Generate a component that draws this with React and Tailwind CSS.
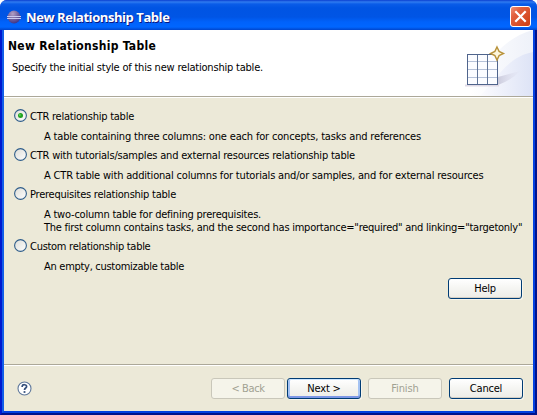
import React from 'react';

const options = [
  {
    label: 'CTR relationship table',
    labelClass: 'tracking-[-0.243px]',
    checked: true,
    lines: [['A table containing three columns: one each for concepts, tasks and references', 'tracking-[-0.171px]']],
  },
  {
    label: 'CTR with tutorials/samples and external resources relationship table',
    labelClass: 'tracking-[-0.2px]',
    lines: [['A CTR table with additional columns for tutorials and/or samples, and for external resources', 'tracking-[-0.178px]']],
  },
  {
    label: 'Prerequisites relationship table',
    labelClass: 'tracking-[-0.233px]',
    lines: [
      ['A two-column table for defining prerequisites.', 'tracking-[-0.221px]'],
      ['The first column contains tasks, and the second has importance="required" and linking="targetonly"', 'tracking-[-0.248px]'],
    ],
  },
  {
    label: 'Custom relationship table',
    labelClass: 'tracking-[-0.28px]',
    lines: [['An empty, customizable table', 'tracking-[-0.286px]']],
  },
];

function Radio({ checked }) {
  return (
    <svg className="h-[13px] w-[13px] shrink-0" viewBox="0 0 13 13">
      <defs>
        <linearGradient id="radioFill" x1="0" y1="0" x2="1" y2="1">
          <stop offset="0" stopColor="#dcdcd7" />
          <stop offset="1" stopColor="#ffffff" />
        </linearGradient>
      </defs>
      <circle cx="6.5" cy="6.5" r="5.9" fill="url(#radioFill)" stroke="#2f5d8a" strokeWidth="1.1" />
      {checked && <circle cx="6.5" cy="6.5" r="2.5" fill="#21a121" />}
      {checked && <circle cx="5.9" cy="5.9" r="1" fill="#55d551" />}
    </svg>
  );
}

function Option({ label, labelClass, checked, lines }) {
  return (
    <div className="pb-[5px]">
      <div className="flex h-[13px] items-center gap-[3px]">
        <Radio checked={checked} />
        <span className={`pt-[2px] ${labelClass}`}>{label}</span>
      </div>
      <div className="pt-[8px] pl-[30px]">
        {lines.map(([text, cls]) => (
          <div key={text} className={`h-[13px] ${cls}`}>{text}</div>
        ))}
      </div>
    </div>
  );
}

const buttonStyles = {
  normal: 'border-[#003c74] bg-linear-to-b from-white via-[#f5f5f2] to-[#eeece6] text-black shadow-[inset_0_-1px_0_#d6d0c5,1px_1px_0_#f7f5ec]',
  focused: 'border-[#003c74] bg-linear-to-b from-white via-[#f5f5f2] to-[#eeece6] text-black shadow-[inset_0_1px_0_#cee7ff,inset_0_-2px_0_#7d97e6,inset_2px_0_0_#a5c3f3,inset_-2px_0_0_#a5c3f3,1px_1px_0_#f7f5ec]',
  disabled: 'border-[#c9c7ba] bg-[#f5f4ea] text-[#a1a192]',
};

function Button({ children, kind = 'normal', className = '' }) {
  return (
    <button className={`h-[21px] w-[74px] rounded-[3px] border pt-px text-center leading-[18px] ${buttonStyles[kind]} ${className}`}>
      {children}
    </button>
  );
}

function EclipseIcon() {
  return (
    <svg className="h-[14px] w-[14px] shrink-0" viewBox="0 0 14 14">
      <defs>
        <radialGradient id="sphere" cx="0.4" cy="0.25" r="0.8">
          <stop offset="0" stopColor="#b3a0c4" />
          <stop offset="0.5" stopColor="#7565a0" />
          <stop offset="1" stopColor="#3a3084" />
        </radialGradient>
      </defs>
      <circle cx="7" cy="7" r="6.4" fill="url(#sphere)" />
      <path d="M0 6.5h14M0 8.5h14" stroke="#c9c9ee" strokeWidth="1" />
    </svg>
  );
}

function CloseButton() {
  return (
    <svg className="h-[21px] w-[21px] shrink-0" viewBox="0 0 21 21">
      <defs>
        <linearGradient id="closeFill" x1="0" y1="0" x2="1" y2="1">
          <stop offset="0" stopColor="#f0957c" />
          <stop offset="0.3" stopColor="#e2603e" />
          <stop offset="1" stopColor="#cc3c10" />
        </linearGradient>
      </defs>
      <rect x="0.5" y="0.5" width="20" height="20" rx="2.5" fill="url(#closeFill)" stroke="#ffffff" />
      <path d="M5.3 5.3l10.4 10.4M15.7 5.3l-10.4 10.4" stroke="#ffffff" strokeWidth="2.2" />
    </svg>
  );
}

function TableBanner() {
  return (
    <svg className="h-[66px] w-[75px] shrink-0" viewBox="0 0 75 66">
      <defs>
        <linearGradient id="swoosh" x1="0" y1="0" x2="1" y2="0">
          <stop offset="0" stopColor="#ffffff" />
          <stop offset="1" stopColor="#eef1f9" />
        </linearGradient>
        <linearGradient id="swooshInner" x1="0" y1="0" x2="1" y2="0">
          <stop offset="0" stopColor="#fbfbfe" />
          <stop offset="1" stopColor="#dde3f6" />
        </linearGradient>
        <linearGradient id="castShadow" x1="0" y1="0" x2="1" y2="0">
          <stop offset="0" stopColor="#cbcbdc" />
          <stop offset="1" stopColor="#e3e5f4" stopOpacity="0.3" />
        </linearGradient>
      </defs>
      <path d="M12 66C22 45 38 10 75 0V66Z" fill="url(#swoosh)" />
      <path d="M22 66C42 45 50 27 75 22V66Z" fill="url(#swooshInner)" />
      <path d="M40 47L62 41Q54 50 40 55Z" fill="url(#castShadow)" />
      <path d="M7 55.5h34" stroke="#dfdae6" strokeWidth="2" />
      <rect x="9.5" y="24.5" width="30" height="30" fill="#fbfcff" />
      <path d="M10 31.5h29M10 39.5h29M10 47.5h29" stroke="#b5c1d8" />
      <path d="M19.5 25v29M29.5 25v29" stroke="#5f7396" />
      <rect x="9.5" y="24.5" width="30" height="30" fill="none" stroke="#4f648c" />
      <path d="M39 17L41.1 21.4L45.5 23.5L41.1 25.6L39 30L36.9 25.6L32.5 23.5L36.9 21.4Z" fill="#fdf6dc" stroke="#b8923a" strokeWidth="1.4" />
    </svg>
  );
}

function HelpIcon() {
  return (
    <svg className="h-[15px] w-[15px] shrink-0" viewBox="0 0 15 15">
      <circle cx="7.5" cy="7.5" r="6.5" fill="#ffffff" stroke="#5f789c" strokeWidth="1.1" />
      <path d="M5.2 6V5.2C5.4 3.2 9.6 3.2 9.6 5.4C9.6 7 7.5 7 7.5 8.9" fill="none" stroke="#35507c" strokeWidth="1.7" />
      <rect x="6.6" y="10.1" width="1.8" height="1.8" fill="#35507c" />
    </svg>
  );
}

export default function App() {
  return (
    <div className="h-[415px] w-[537px] overflow-hidden bg-white font-['DejaVu_Sans_Condensed','DejaVu_Sans',sans-serif] text-[11px] leading-[13px] whitespace-nowrap text-black">
      <div className="flex h-[415px] w-[537px] flex-col overflow-hidden rounded-t-[7px] bg-[#0831d9]">
        <header className="flex h-[30px] shrink-0 items-center justify-between bg-[linear-gradient(to_bottom,#0a3fd0_0px,#2f7bf0_2px,#0a5ce8_4px,#0054e3_8px,#0055e5_17px,#0062fb_22px,#0066ff_27px,#0045cc_30px)] pt-[3px] pr-[6px] pl-[7px]">
          <div className="flex items-center gap-[5px]">
            <EclipseIcon />
            <h1 className="font-['Open_Sans','Noto_Sans',sans-serif] text-[13px] leading-[18px] font-bold tracking-[-0.43px] text-white [text-shadow:1px_1px_0_#0a1883]">New Relationship Table</h1>
          </div>
          <CloseButton />
        </header>
        <div className="flex flex-1 flex-col border-r-2 border-b-2 border-l-2 border-r-[#00138c] border-b-[#00138c] border-l-[#0019cf]">
          <div className="flex flex-1 flex-col border-r-2 border-b-2 border-l-2 border-r-[#0340e0] border-b-[#0340e0] border-l-[#125de8] bg-[#ece9d8]">
            <section className="flex h-[66px] shrink-0 justify-between bg-white pl-[4px]">
              <div className="pt-[9px]">
                <h2 className="text-[12px] leading-[15px] font-bold tracking-[0.28px]">New Relationship Table</h2>
                <p className="pt-[7px] pl-[4px] tracking-[-0.206px]">Specify the initial style of this new relationship table.</p>
              </div>
              <TableBanner />
            </section>
            <div className="h-[2px] shrink-0 border-t border-[#aca899] bg-white" />
            <main className="h-[266px] shrink-0 pt-[11px] pr-[11px] pl-[10px]">
              {options.map((option) => (
                <Option key={option.label} {...option} />
              ))}
              <div className="flex justify-end">
                <Button className="tracking-[-0.3px]">Help</Button>
              </div>
            </main>
            <div className="h-[2px] shrink-0 border-t border-[#aca899] bg-white" />
            <footer className="flex flex-1 items-center justify-between pr-[10px] pl-[13px]">
              <HelpIcon />
              <div className="flex">
                <Button kind="disabled" className="tracking-[-0.4px]">&lt; Back</Button>
                <Button kind="focused" className="ml-[2px] tracking-[-0.2px]">Next &gt;</Button>
                <Button kind="disabled" className="ml-[7px] tracking-[-0.1px]">Finish</Button>
                <Button className="ml-[7px] tracking-[-0.2px]">Cancel</Button>
              </div>
            </footer>
          </div>
        </div>
      </div>
    </div>
  );
}
